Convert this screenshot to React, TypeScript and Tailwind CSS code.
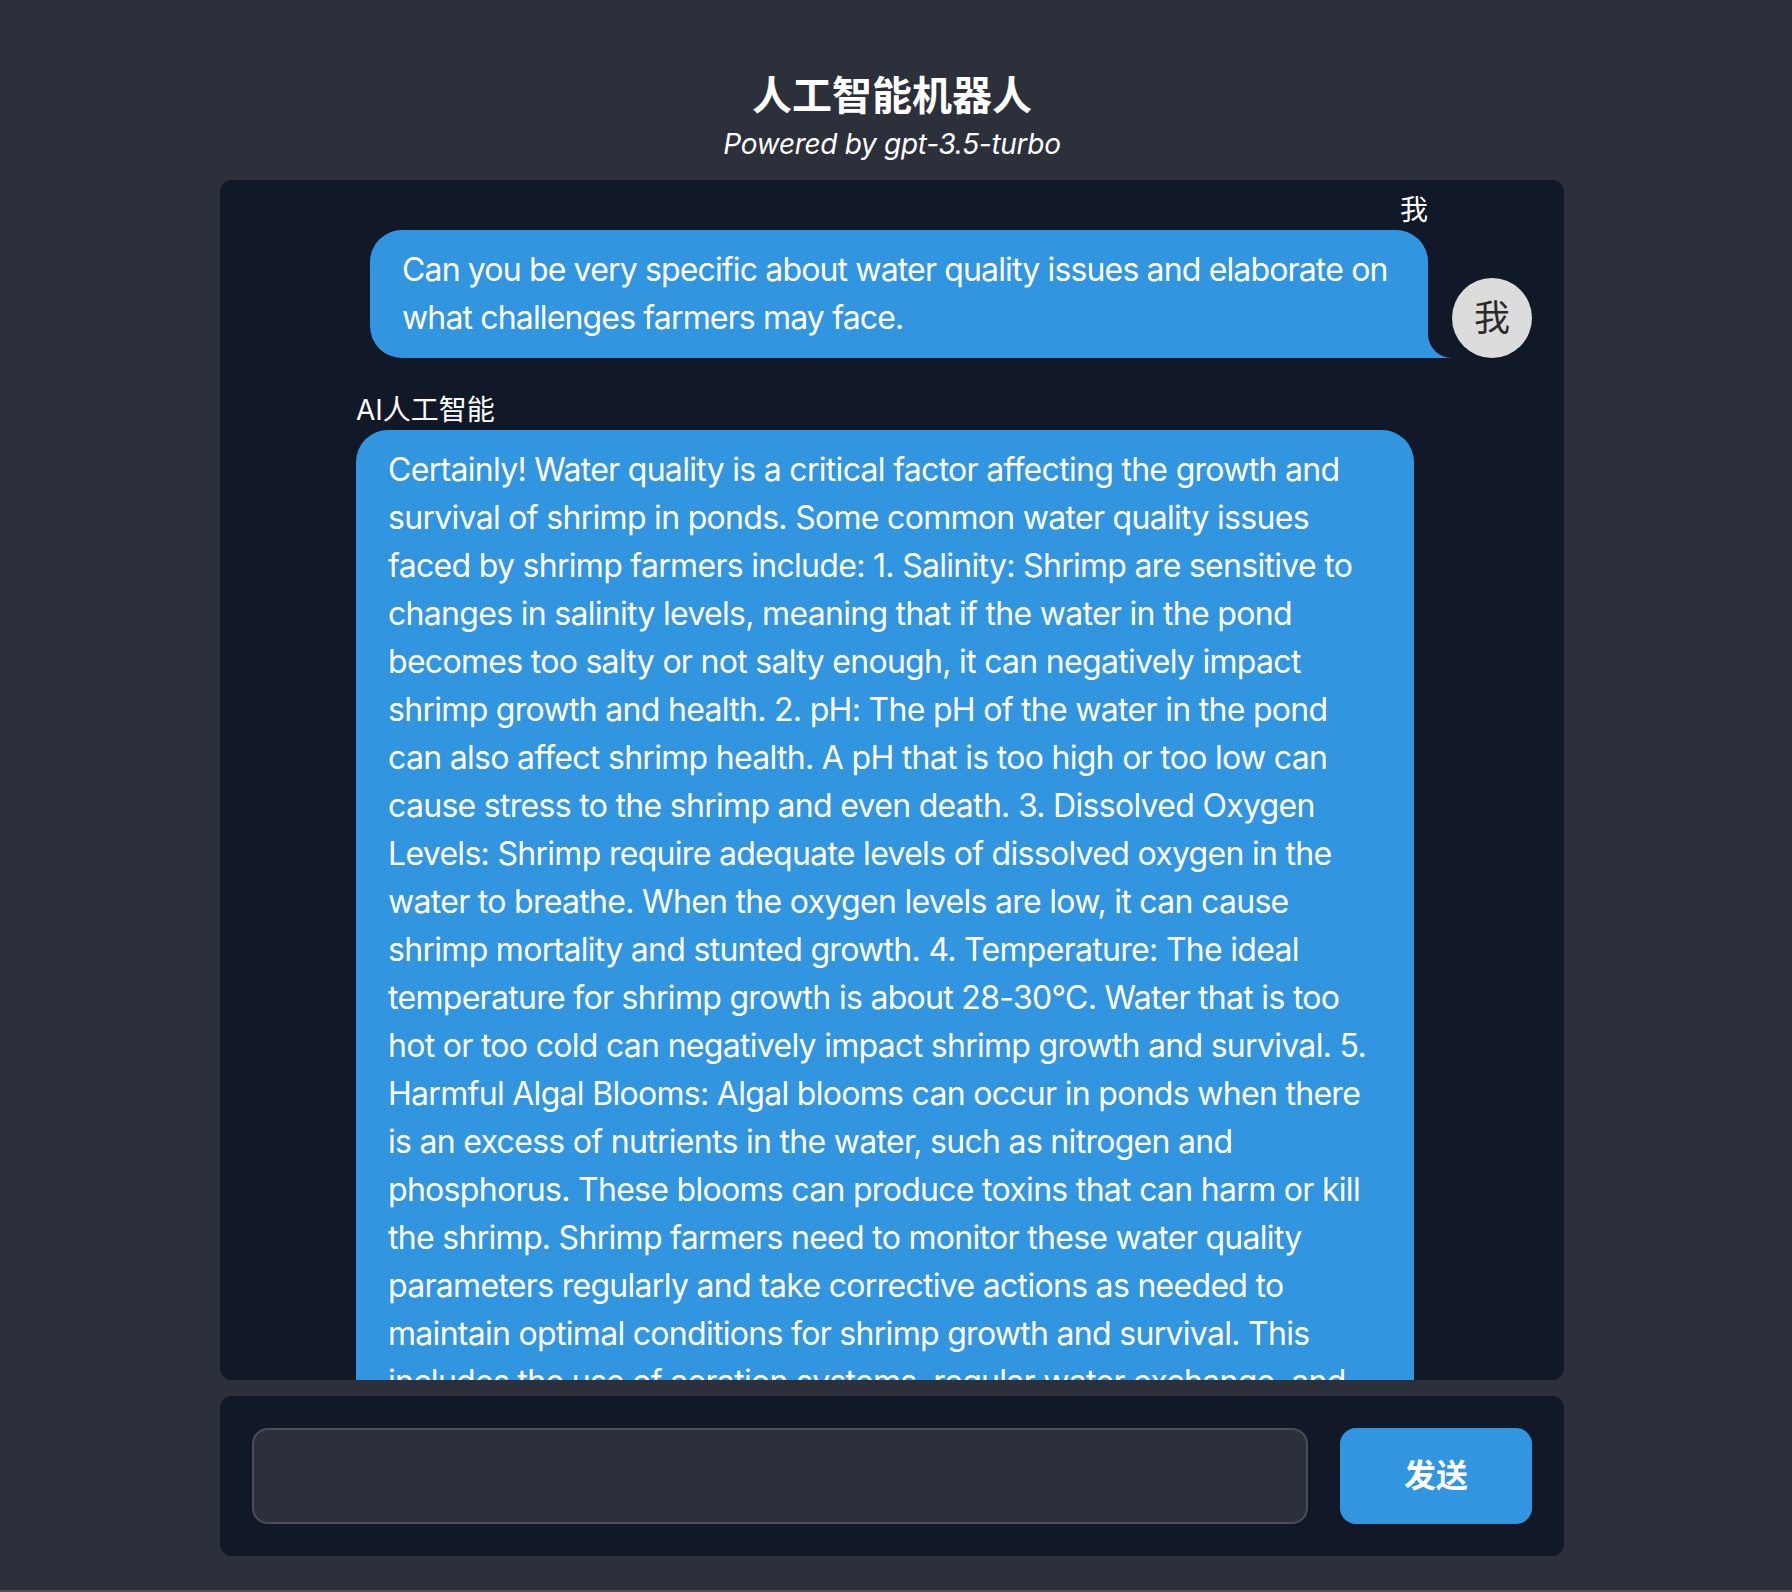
import React from "react";

const latin = "font-['Inter','Noto_Sans_CJK_SC',sans-serif]";

const aiText =
  "Certainly! Water quality is a critical factor affecting the growth and survival of shrimp in ponds. Some common water quality issues faced by shrimp farmers include: 1. Salinity: Shrimp are sensitive to changes in salinity levels, meaning that if the water in the pond becomes too salty or not salty enough, it can negatively impact shrimp growth and health. 2. pH: The pH of the water in the pond can also affect shrimp health. A pH that is too high or too low can cause stress to the shrimp and even death. 3. Dissolved Oxygen Levels: Shrimp require adequate levels of dissolved oxygen in the water to breathe. When the oxygen levels are low, it can cause shrimp mortality and stunted growth. 4. Temperature: The ideal temperature for shrimp growth is about 28-30°C. Water that is too hot or too cold can negatively impact shrimp growth and survival. 5. Harmful Algal Blooms: Algal blooms can occur in ponds when there is an excess of nutrients in the water, such as nitrogen and phosphorus. These blooms can produce toxins that can harm or kill the shrimp. Shrimp farmers need to monitor these water quality parameters regularly and take corrective actions as needed to maintain optimal conditions for shrimp growth and survival. This includes the use of aeration systems, regular water exchange, and proper feeding practices.";

function Avatar({ label }: { label: string }) {
  return (
    <div className="w-20 h-20 shrink-0 rounded-full bg-[#dcdcdc] flex items-center justify-center text-[36px] text-[#2a2a2a]">
      {label}
    </div>
  );
}

export default function App() {
  return (
    <div
      className={`h-[1592px] bg-[#2b303b] border-b-2 border-[#4c4f57] pr-2 flex flex-col items-center ${latin}`}
    >
      {/* Header */}
      <div className="pt-[68px] text-center text-white">
        <h1 className="text-[40px] leading-[56px] font-bold">人工智能机器人</h1>
        <p className="text-[28px] leading-[40px] italic tracking-[-0.3px]">Powered by gpt-3.5-turbo</p>
      </div>

      {/* Chat window */}
      <div className="mt-4 w-[1344px] h-[1200px] rounded-xl bg-[#111827] overflow-hidden px-8 pt-[10px] text-white">
        {/* user message */}
        <div className="flex justify-end items-end gap-6 mb-8">
          <div className="flex flex-col items-end max-w-[1058px]">
            <span className="text-[28px] leading-[40px]">我</span>
            <div className="relative rounded-[32px] rounded-br-none bg-[#3195e0] px-8 py-4 text-[32px] leading-[48px] tracking-[-0.85px]">
              Can you be very specific about water quality issues and elaborate on what challenges farmers may face.
              <svg
                className="absolute -right-6 bottom-0 w-6 h-6"
                viewBox="0 0 24 24"
              >
                <path d="M0 0 A24 24 0 0 0 24 24 L0 24 Z" fill="#3195e0" />
              </svg>
            </div>
          </div>
          <Avatar label="我" />
        </div>

        {/* AI message */}
        <div className="flex items-end gap-6 mb-8">
          <Avatar label="AI" />
          <div className="flex flex-col items-start max-w-[1058px]">
            <span className="text-[28px] leading-[40px]">AI人工智能</span>
            <div className="relative rounded-[32px] rounded-bl-none bg-[#3195e0] px-8 py-4 text-[32px] leading-[48px] tracking-[-0.7px]">
              {aiText}
              <svg
                className="absolute -left-6 bottom-0 w-6 h-6"
                viewBox="0 0 24 24"
              >
                <path d="M24 0 A24 24 0 0 1 0 24 L24 24 Z" fill="#3195e0" />
              </svg>
            </div>
          </div>
        </div>
      </div>

      {/* Input bar */}
      <div className="mt-4 w-[1344px] rounded-xl bg-[#111827] p-8 flex gap-8">
        <input
          className="flex-1 h-24 rounded-2xl border-2 border-[#4a4f5b] bg-[#2b303b] px-6 text-[32px] text-white outline-none"
          type="text"
        />
        <button className="w-48 h-24 rounded-2xl bg-[#3195e0] text-white text-[32px] font-bold">
          发送
        </button>
      </div>
    </div>
  );
}
